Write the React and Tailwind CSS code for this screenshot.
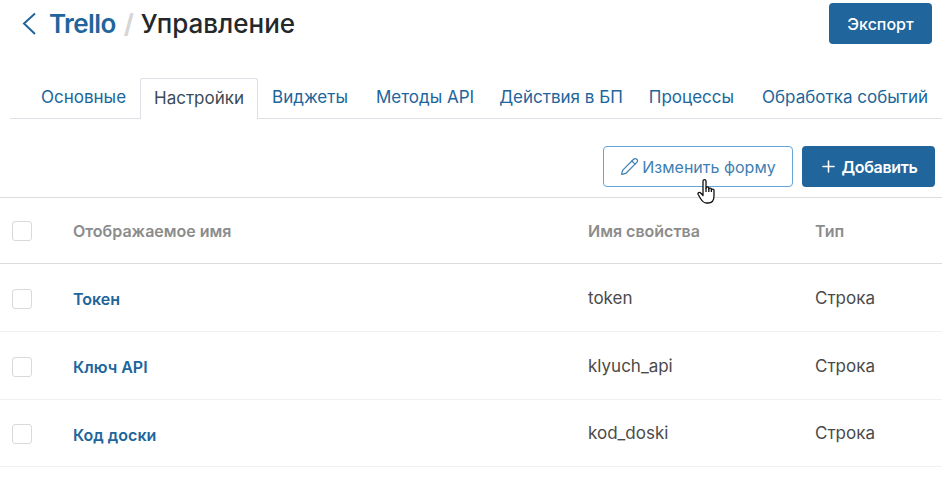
import { Pencil, Plus } from "lucide-react";

const tabs = [
  { label: "Основные", px: "px-[14px]" },
  { label: "Настройки", px: "px-[13px]" },
  { label: "Виджеты", px: "px-[14px]" },
  { label: "Методы API", px: "pl-[14px] pr-[11px]" },
  { label: "Действия в БП", px: "pl-[14px] pr-[12px]" },
  { label: "Процессы", px: "px-[14px]" },
  { label: "Обработка событий", px: "px-[14px]" },
];

const rows = [
  { name: "Токен", prop: "token", type: "Строка", h: "h-[68px]", nameMt: "mt-[2px]" },
  { name: "Ключ API", prop: "klyuch_api", type: "Строка", h: "h-[68px]", nameMt: "mt-[2px]" },
  { name: "Код доски", prop: "kod_doski", type: "Строка", h: "h-[67px]", nameMt: "mt-[4px]" },
];

const Checkbox = () => (
  <div className="w-5 h-5 ml-3 border border-[#d9d9d9] rounded-[3px] bg-white" />
);

const HandCursor = () => (
  <svg
    className="absolute left-[93px] top-[32px] w-[20px] h-[25px]"
    viewBox="0 0 20 25"
    fill="#fff"
    stroke="#111"
    strokeWidth="1.3"
    strokeLinejoin="round"
  >
    <path d="M6 2.2C6 .2 9 .2 9 2.2V9C9 7.5 11.8 7.5 11.8 9V10C11.8 8.7 14.4 8.7 14.4 10V11C14.4 9.8 17 9.8 17 11V17C17 21 15 24 11 24H9.5C6.5 24 5 22 3.5 19.5L1.2 15.5C.4 13.8 2.5 12.6 3.7 14L6 16.5Z" />
    <path d="M9 9V13M11.8 10V13M14.4 11V13" fill="none" />
  </svg>
);

const App = () => {
  return (
    <div className="w-[944px] h-[486px] bg-white overflow-hidden font-['Inter',sans-serif] text-[16px]">
      <div className="h-[78px] flex items-start justify-between pl-[22px] pr-[12px]">
        <div className="flex items-center h-[46px] text-[26px] font-medium">
          <svg className="w-[14px] h-[24px] text-[#20659b]" viewBox="0 0 14 24" fill="none" stroke="currentColor" strokeWidth="2">
            <path d="M13 2.5 L2 12.5 L13 23" />
          </svg>
          <span className="ml-[13px] tracking-[-0.6px] text-[#20659b] font-semibold">Trello</span>
          <span className="ml-[8px] mr-[7px] text-[#d6d6d6] font-bold">/</span>
          <span className="text-[#25282b]">Управление</span>
        </div>
        <button className="mt-[3px] w-[103px] h-[41px] rounded-[4px] bg-[#20659b] text-white text-[16px] font-medium">
          Экспорт
        </button>
      </div>

      <div className="h-[41px] ml-[10px] mr-[2px] pl-[17px] flex border-b border-[#dfdfe6] text-[17px]">
        {tabs.map((tab) => (
          <div
            key={tab.label}
            className={
              tab.label === "Настройки"
                ? `h-[41px] ${tab.px} flex items-center bg-white border border-b-0 border-[#dfdfe6] rounded-t-[3px] text-[#3b4a55]`
                : `h-[40px] ${tab.px} flex items-center whitespace-nowrap text-[#20659b]`
            }
          >
            {tab.label}
          </div>
        ))}
      </div>

      <div className="h-[78px] flex items-start justify-end gap-[9px] pt-[27px] pr-[9px]">
        <button className="relative w-[190px] h-[41px] flex items-center justify-center gap-[3px] border border-[#64a6d9] rounded-[4px] text-[#3f7fb2] bg-white">
          <Pencil className="w-[19px] h-[19px]" strokeWidth={1.5} />
          Изменить форму
          <HandCursor />
        </button>
        <button className="w-[133px] h-[41px] flex items-center justify-center gap-[3px] rounded-[4px] bg-[#20659b] text-white font-semibold tracking-[-0.3px]">
          <Plus className="w-[19px] h-[19px]" strokeWidth={2} />
          Добавить
        </button>
      </div>

      <div className="mr-[2px]">
        <div className="h-[67px] flex items-center border-y border-[#dcdcdc] text-[#8c8c8c] text-[16px] font-semibold">
          <div className="w-[73px]"><Checkbox /></div>
          <div className="w-[515px] mt-[1px]">Отображаемое имя</div>
          <div className="w-[227px] mt-[1px]">Имя свойства</div>
          <div className="mt-[1px]">Тип</div>
        </div>
        {rows.map((row) => (
          <div key={row.prop} className={`${row.h} flex items-center border-b border-[#f1f1f1] text-[#4a4a4a]`}>
            <div className="w-[73px] mt-[2px]"><Checkbox /></div>
            <div className={`w-[515px] ${row.nameMt} text-[#20659b] font-semibold`}>{row.name}</div>
            <div className="w-[227px] mt-[2px] text-[17px]">{row.prop}</div>
            <div className="mt-[2px] text-[17px]">{row.type}</div>
          </div>
        ))}
      </div>
    </div>
  );
};

export default App;
